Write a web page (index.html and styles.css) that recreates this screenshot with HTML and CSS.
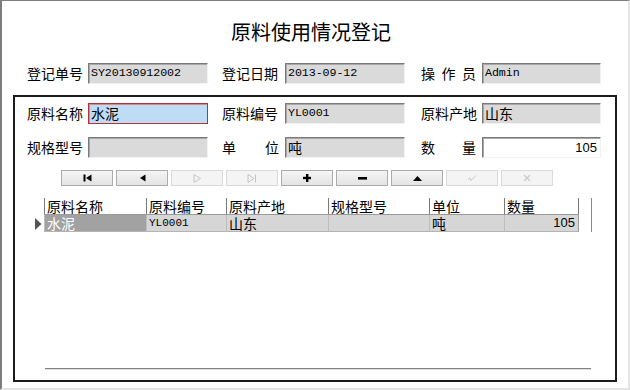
FILE: index.html
```html
<!DOCTYPE html>
<html lang="zh-CN">
<head>
<meta charset="utf-8">
<title>原料使用情况登记</title>
<link rel="stylesheet" href="styles.css">
</head>
<body>
<div class="window">
  <div class="title">原料使用情况登记</div>

  <div class="row top-row">
    <div class="lbl w61"><span class="t4">登记单号</span></div>
    <div class="inp w120 mono">SY20130912002</div>
    <div class="lbl w63 ml14"><span class="t4">登记日期</span></div>
    <div class="inp w120 mono">2013-09-12</div>
    <div class="lbl w61 ml16"><span class="t4 spread"><i>操</i><i>作</i><i>员</i></span></div>
    <div class="inp w119 mono">Admin</div>
  </div>

  <div class="group">
    <div class="row">
      <div class="lbl w61"><span class="t4">原料名称</span></div>
      <div class="inp w120 focus">水泥</div>
      <div class="lbl w63 ml14"><span class="t4">原料编号</span></div>
      <div class="inp w120 mono">YL0001</div>
      <div class="lbl w61 ml16"><span class="t4">原料产地</span></div>
      <div class="inp w119">山东</div>
    </div>
    <div class="row row3">
      <div class="lbl w61"><span class="t4">规格型号</span></div>
      <div class="inp w120"></div>
      <div class="lbl w63 ml14"><span class="t4 spread wide"><i>单</i><i>位</i></span></div>
      <div class="inp w120">吨</div>
      <div class="lbl w61 ml16"><span class="t4 spread"><i>数</i><i>量</i></span></div>
      <div class="inp w119 white num">105</div>
    </div>

    <div class="nav">
      <div class="btn"><svg width="9" height="8" viewBox="0 0 9 8"><rect x="0.5" y="0.5" width="2" height="7" fill="#000"/><polygon points="8.5,0.5 8.5,7.5 3,4" fill="#000"/></svg></div>
      <div class="btn"><svg width="7" height="8" viewBox="0 0 7 8"><polygon points="6.5,0.5 6.5,7.5 1,4" fill="#000"/></svg></div>
      <div class="btn off"><svg width="8" height="9" viewBox="0 0 8 9"><polygon points="1,0.5 1,8.5 7.5,4.5" fill="none" stroke="#c4c4c4" stroke-width="1"/></svg></div>
      <div class="btn off"><svg width="10" height="9" viewBox="0 0 10 9"><polygon points="1,0.5 1,8.5 7,4.5" fill="none" stroke="#c4c4c4" stroke-width="1"/><line x1="8.5" y1="0.5" x2="8.5" y2="8.5" stroke="#c4c4c4"/></svg></div>
      <div class="btn"><svg width="8" height="8" viewBox="0 0 8 8"><rect x="3" y="0" width="2.4" height="8" fill="#000"/><rect x="0" y="2.8" width="8" height="2.4" fill="#000"/></svg></div>
      <div class="btn"><svg width="9" height="3" viewBox="0 0 9 3"><rect x="0" y="0" width="9" height="2.6" fill="#000"/></svg></div>
      <div class="btn"><svg width="9" height="5" viewBox="0 0 9 5"><polygon points="0,5 9,5 4.5,0" fill="#000"/></svg></div>
      <div class="btn off"><svg width="10" height="8" viewBox="0 0 10 8"><path d="M1 5.5 L3 4 L4 6.5 L9 1.5" fill="none" stroke="#c8c8c8" stroke-width="1"/></svg></div>
      <div class="btn off"><svg width="8" height="8" viewBox="0 0 8 8"><path d="M1 1 L7 7 M7 1 L1 7" fill="none" stroke="#c8c8c8" stroke-width="1.2"/></svg></div>
    </div>

    <div class="gridwrap">
      <div class="grid">
        <div class="ghead">
          <div class="gh c1">原料名称</div>
          <div class="gh c2">原料编号</div>
          <div class="gh c3">原料产地</div>
          <div class="gh c4">规格型号</div>
          <div class="gh c5">单位</div>
          <div class="gh c6 last">数量</div>
        </div>
        <div class="grow">
          <div class="gind"><svg width="7" height="12" viewBox="0 0 7 12"><polygon points="0,0 0,12 6.5,6" fill="#555"/></svg></div>
          <div class="gd c1 sel">水泥</div>
          <div class="gd c2 mono small">YL0001</div>
          <div class="gd c3">山东</div>
          <div class="gd c4"></div>
          <div class="gd c5">吨</div>
          <div class="gd c6 last num">105</div>
        </div>
      </div>
      <div class="vline"></div>
    </div>

    <div class="hr"></div>
  </div>
</div>
</body>
</html>
```

FILE: styles.css
```css
* { box-sizing: border-box; }
html, body { margin: 0; padding: 0; background: #fff; }
body {
  font-family: "Noto Sans CJK SC", "Noto Sans", sans-serif;
  color: #000;
}
.window {
  width: 630px;
  height: 390px;
  background: #fff;
  border-left: 2px solid #7d7d7d;
  border-top: 1px solid #7d7d7d;
  border-right: 2px solid #e4e4e4;
  border-bottom: 2px solid #e4e4e4;
  display: flex;
  flex-direction: column;
}
.title {
  margin-top: 19px;
  height: 24px;
  line-height: 24px;
  font-size: 20px;
  text-align: center;
  padding-right: 8px;
}
.row {
  display: flex;
  align-items: center;
  height: 21px;
}
.top-row {
  margin-top: 19px;
  padding-left: 25px;
}
.lbl {
  font-size: 14px;
  line-height: 21px;
  height: 21px;
  white-space: nowrap;
}
.t4 { display: inline-block; width: 56px; }
.spread { display: inline-flex; justify-content: space-between; width: 55px; }
.spread.wide { width: 57px; }
.spread i { font-style: normal; }
.w61 { width: 61px; }
.w63 { width: 63px; }
.ml14 { margin-left: 14px; }
.ml16 { margin-left: 16px; }
.inp {
  height: 21px;
  background: #dadada;
  border-top: 1px solid #7a7a7a;
  border-left: 1px solid #7a7a7a;
  border-right: 1px solid #f2f2f2;
  border-bottom: 1px solid #f2f2f2;
  box-shadow: inset 1px 1px 0 #a8a8a8;
  font-size: 14px;
  line-height: 19px;
  padding-left: 2px;
  white-space: nowrap;
}
.w120 { width: 120px; }
.w119 { width: 119px; }
.mono {
  font-family: "Liberation Mono", "DejaVu Sans Mono", monospace;
  font-size: 11.7px;
  letter-spacing: -0.1px;
}
.inp.focus {
  background: #bfdcf6;
  border: 1px solid #b0343a;
  box-shadow: inset 1px 1px 0 #d48a8a;
}
.inp.white { background: #fff; }
.num {
  text-align: right;
  font-family: "Liberation Sans", Arial, sans-serif;
  font-size: 13px;
  padding-right: 3px;
}
.group {
  margin: 11px 0 0 11px;
  width: 604px;
  height: 287px;
  border: 2px solid #1c1c1c;
  padding: 6px 0 10px 12px;
  display: flex;
  flex-direction: column;
}
.row3 { margin-top: 13px; }
.nav {
  display: flex;
  gap: 3px;
  margin: 12px 0 0 34px;
}
.btn {
  width: 52px;
  height: 16px;
  border: 1px solid #acacac;
  background: linear-gradient(#f5f5f5, #e3e3e3);
  display: flex;
  align-items: center;
  justify-content: center;
}
.btn.off {
  border-color: #dadada;
  background: #f4f4f4;
}
.btn svg { display: block; }
.gridwrap {
  display: flex;
  align-items: flex-start;
  margin: 12px 0 0 7px;
}
.grid { display: flex; flex-direction: column; }
.ghead, .grow { display: flex; }
.ghead { height: 17px; border-bottom: 1px solid #9a9a9a; margin-left: 10px; }
.gind {
  width: 10px;
  height: 17px;
  display: flex;
  align-items: center;
  padding-left: 1px;
}
.gh {
  height: 16px;
  font-size: 14px;
  line-height: 16px;
  border-left: 1px solid #7a7a7a;
  padding-left: 2px;
  white-space: nowrap;
}
.gh.last { border-right: 1px solid #7a7a7a; }
.c1 { width: 102px; }
.c2 { width: 80px; }
.c3 { width: 102px; }
.c4 { width: 101px; }
.c5 { width: 75px; }
.c6 { width: 75px; }
.grow { height: 17px; }
.gd {
  height: 17px;
  background: #d6d6d6;
  border-left: 1px solid #bdbdbd;
  border-bottom: 1px solid #b4b4b4;
  font-size: 14px;
  line-height: 16px;
  padding-left: 2px;
  white-space: nowrap;
}
.gd.last { border-right: 1px solid #9a9a9a; }
.gd.sel { background: #a2a2a2; color: #fff; }
.gd.small { font-size: 11px; font-family: "Liberation Mono", "DejaVu Sans Mono", monospace; letter-spacing: 0; }
.gd.num { font-size: 13px; padding-right: 3px; line-height: 16px; }
.vline {
  width: 1px;
  height: 34px;
  background: #8a8a8a;
  margin-left: 12px;
}
.hr {
  margin-top: auto;
  margin-left: 18px;
  width: 546px;
  height: 2px;
  border-top: 1px solid #7f7f7f;
  border-bottom: 1px solid #e2e2e2;
}
```
